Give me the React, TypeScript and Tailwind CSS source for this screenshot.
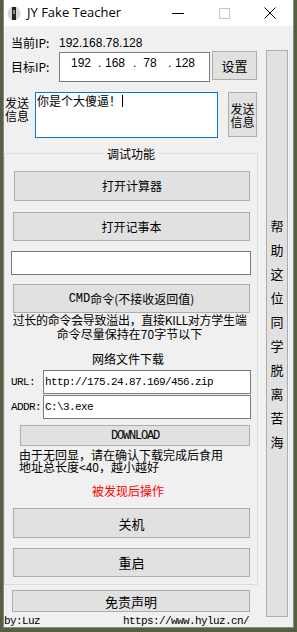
const cjk = "font-['Noto_Sans_CJK_SC',sans-serif]";
const mono = "font-['Liberation_Mono','Noto_Sans_CJK_SC',monospace]";

function Btn({ className, children }: { className: string; children: React.ReactNode }) {
  return (
    <div
      className={`flex shrink-0 items-center justify-center border border-[#adadad] bg-[#e1e1e1] text-[12px] leading-none text-black ${cjk} ${className}`}
    >
      {children}
    </div>
  );
}

const helpChars = ["帮", "助", "这", "位", "同", "学", "脱", "离", "苦", "海"];

export default function App() {
  return (
    <div className="h-[632px] w-[297px] overflow-hidden bg-[#56603e]">
      <div className="ml-[3px] flex h-[628px] w-[291px] flex-col border-x border-b border-[#8a8a8a] bg-[#f0f0f0]">
        {/* title bar */}
        <div className="flex h-[26px] shrink-0 items-center bg-white">
          <svg width="14" height="15" viewBox="0 0 14 15" className="ml-[3px]">
            <ellipse cx="7" cy="7.5" rx="6.5" ry="7" fill="#d6d6d6" />
            <rect x="5" y="1" width="4" height="13" fill="#222" />
            <rect x="6" y="4" width="2" height="4" fill="#888" />
          </svg>
          <span className="ml-[6px] font-['Open_Sans',sans-serif] text-[13px] text-black">JY Fake Teacher</span>
          <div className="flex-1" />
          <div className="flex h-full w-[46px] items-center justify-center">
            <div className="h-px w-[12px] bg-black" />
          </div>
          <div className="flex h-full w-[46px] items-center justify-center">
            <div className="h-[11px] w-[11px] border border-[#c4c4c4]" />
          </div>
          <div className="flex h-full w-[46px] items-center justify-center">
            <svg width="12" height="12" viewBox="0 0 12 12">
              <path d="M0.5 0.5 L11.5 11.5 M11.5 0.5 L0.5 11.5" stroke="#000" strokeWidth="1" />
            </svg>
          </div>
        </div>

        {/* body */}
        <div className="flex">
          <div className="flex w-[259px] flex-col text-black">
            {/* current ip */}
            <div className={`mt-[10px] flex h-[14px] items-center pl-[7px] text-[12px] ${cjk}`}>
              <span className="w-[48px]">当前IP:</span>
              <span className="font-['Liberation_Sans',sans-serif]">192.168.78.128</span>
            </div>

            {/* target ip */}
            <div className="mt-[1px] flex items-start">
              <div className={`w-[55px] pl-[7px] pt-[9px] text-[12px] leading-[14px] ${cjk}`}>目标IP:</div>
              <div className="mt-[1px] flex h-[30px] w-[151px] items-start border border-[#7a7a7a] bg-white pt-[3px] font-['Liberation_Sans',sans-serif] text-[12px] leading-[14px]">
                <span className="ml-[11px] w-[20px] text-center">192</span>
                <span className="ml-[7px] w-[6px]">.</span>
                <span className="ml-[1px] w-[20px] text-center">168</span>
                <span className="ml-[8px] w-[6px]">.</span>
                <span className="ml-[3px] w-[16px] text-center">78</span>
                <span className="ml-[10px] w-[6px]">.</span>
                <span className="ml-[1px] w-[20px] text-center">128</span>
              </div>
              <Btn className="ml-[2px] h-[29px] w-[45px] text-[13px]">设置</Btn>
            </div>

            {/* send message */}
            <div className="mt-[10px] flex items-start">
              <div className={`w-[31px] pl-[1px] pt-[4px] text-[12px] leading-[13px] ${cjk}`}>
                发送
                <br />
                信息
              </div>
              <div className={`flex h-[46px] w-[183px] items-start border border-[#0078d7] bg-white px-[1px] pt-[1px] text-[12px] leading-[14px] ${cjk}`}>
                <span>你是个大傻逼！</span>
                <span className="ml-[1px] mt-[1px] h-[12px] w-px bg-black" />
              </div>
              <Btn className="ml-[10px] h-[45px] w-[29px] flex-col text-[12px] !leading-[13px]">
                <span>发送</span>
                <span>信息</span>
              </Btn>
            </div>

            {/* group box */}
            <div className="relative mt-[15px] flex w-[254px] flex-col border border-[#dcdcdc] pb-[7px]">
              <span
                className={`absolute left-1/2 top-[-8px] -translate-x-1/2 bg-[#f0f0f0] px-[3px] text-[12px] leading-[16px] ${cjk}`}
              >
                调试功能
              </span>
              <Btn className="ml-[9px] mt-[17px] h-[30px] w-[236px]">打开计算器</Btn>
              <Btn className="ml-[8px] mt-[11px] h-[29px] w-[237px]">打开记事本</Btn>
              <div className="ml-[6px] mt-[10px] h-[24px] w-[240px] border border-[#7a7a7a] bg-white" />
              <Btn className="ml-[8px] mt-[9px] h-[29px] w-[237px]">
                <span className={mono}>CMD</span>命令(不接收返回值)
              </Btn>
              <div className={`pr-[3px] text-center text-[12px] leading-[14px] ${cjk}`}>
                <div className="whitespace-nowrap tracking-[-0.3px]">过长的命令会导致溢出，直接KILL对方学生端</div>
                <div>命令尽量保持在70字节以下</div>
              </div>
              <div className={`mt-[11px] pr-[6px] text-center text-[12px] leading-[14px] ${cjk}`}>网络文件下载</div>

              <div className="mt-[4px] flex items-center">
                <span className={`ml-[6px] w-[32px] text-[11px] tracking-[-0.6px] ${mono}`}>URL:</span>
                <div className={`flex h-[24px] w-[208px] items-center border border-[#7a7a7a] bg-white pl-[1px] text-[11px] tracking-[-0.6px] ${mono}`}>
                  http://175.24.87.169/456.zip
                </div>
              </div>
              <div className="mt-[1px] flex items-center">
                <span className={`ml-[6px] w-[32px] text-[11px] tracking-[-0.6px] ${mono}`}>ADDR:</span>
                <div className={`flex h-[24px] w-[208px] items-center border border-[#7a7a7a] bg-white pl-[1px] text-[11px] tracking-[-0.6px] ${mono}`}>
                  C:\3.exe
                </div>
              </div>

              <Btn className="ml-[15px] mt-[6px] h-[21px] w-[230px]">
                <span className={`text-[12px] tracking-[-1.2px] ${mono}`}>DOWNLOAD</span>
              </Btn>
              <div className={`ml-[14px] mt-[3px] text-[12px] leading-[12px] ${cjk}`}>
                <div>由于无回显，请在确认下载完成后食用</div>
                <div>地址总长度&lt;40，越小越好</div>
              </div>
              <div className={`mt-[11px] pr-[6px] text-center text-[12px] leading-[14px] text-[#ff0000] ${cjk}`}>被发现后操作</div>
              <Btn className="ml-[8px] mt-[10px] h-[30px] w-[237px] text-[13px]">关机</Btn>
              <Btn className="ml-[8px] mt-[10px] h-[29px] w-[237px] text-[13px]">重启</Btn>
            </div>

            <Btn className="ml-[8px] mt-[5px] h-[22px] w-[238px] text-[13px]">免责声明</Btn>
            <div className={`mt-[2px] flex h-[14px] w-[245px] items-center justify-between text-[11px] tracking-[-0.6px] ${mono}`}>
              <span>by:Luz</span>
              <span>https://www.hyluz.cn/</span>
            </div>
          </div>

          {/* right tall button */}
          <div
            className={`ml-[3px] mt-[24px] flex h-[567px] w-[22px] flex-col items-center justify-center border border-[#adadad] bg-[#e1e1e1] text-[13px] leading-[24px] text-black ${cjk}`}
          >
            {helpChars.map((c) => (
              <span key={c}>{c}</span>
            ))}
          </div>
        </div>
      </div>
    </div>
  );
}
